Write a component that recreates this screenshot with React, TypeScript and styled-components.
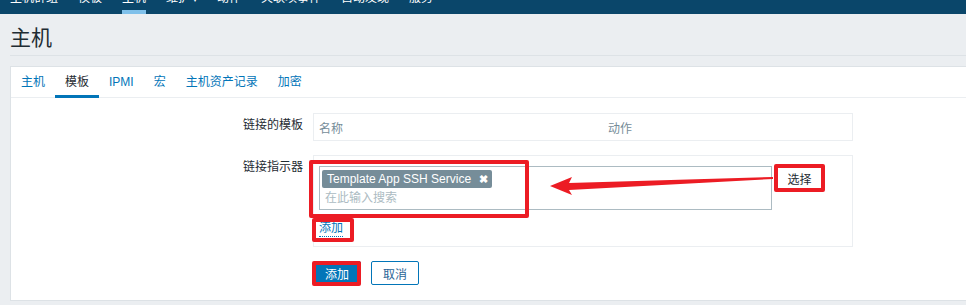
import React from 'react';
import styled, { createGlobalStyle } from 'styled-components';

const GlobalStyle = createGlobalStyle`
  html, body {
    margin: 0;
    padding: 0;
    background: #ebeef1;
    overflow: hidden;
  }
  body {
    font-family: Arial, 'Liberation Sans', 'Noto Sans CJK SC', sans-serif;
    font-size: 12px;
    color: #1f2c33;
  }
`;

const Page = styled.div`
  position: relative;
  width: 966px;
  height: 305px;
  overflow: hidden;
  background: #ebeef1;
`;

const TopNav = styled.nav`
  display: flex;
  height: 14px;
  overflow: hidden;
  background: #0a466a;
  padding-left: 10px;
`;

const NavItem = styled.div<{ active?: boolean }>`
  margin-top: -9px;
  margin-right: 20px;
  height: 23px;
  line-height: 14px;
  color: #ffffff;
  white-space: nowrap;
  border-bottom: 4px solid ${p => (p.active ? '#7fc0ea' : 'transparent')};
  box-sizing: border-box;
`;

const Caret = styled.span`
  font-size: 8px;
  margin-left: 3px;
`;

const Header = styled.header`
  margin-left: 10px;
  padding-top: 10px;
  height: 31px;
  border-bottom: 1px solid #dde2e6;
`;

const Title = styled.h1`
  margin: 0;
  font-size: 21px;
  font-weight: normal;
  line-height: 28px;
  color: #1f2c33;
`;

const Panel = styled.section`
  margin: 10px -10px 0 10px;
  background: #ffffff;
  border: 1px solid #dde2e6;
  height: 233px;
`;

const Tabs = styled.ul`
  display: flex;
  margin: 0;
  padding: 0;
  list-style: none;
  height: 30px;
  border-bottom: 1px solid #ebeef1;
`;

const Tab = styled.li<{ active?: boolean }>`
  padding: 0 10px;
  line-height: 30px;
  box-sizing: border-box;
  color: ${p => (p.active ? '#1f2c33' : '#0275b8')};
  border-bottom: 3px solid ${p => (p.active ? '#0275b8' : 'transparent')};
  margin-bottom: ${p => (p.active ? '-1px' : '0')};
  height: ${p => (p.active ? '31px' : '30px')};
`;

const Form = styled.div`
  display: grid;
  grid-template-columns: 292px 540px;
  column-gap: 10px;
  row-gap: 14px;
  padding-top: 15px;
`;

const Label = styled.div`
  text-align: right;
  padding-top: 5px;
  line-height: 14px;
  color: #1f2c33;
`;

const Box = styled.div<{ padded?: boolean }>`
  border: 1px solid #ebeef1;
  box-sizing: border-box;
  padding: ${p => (p.padded ? '10px 5px 9px 5px' : '0')};
`;

const HeadRow = styled.div`
  display: grid;
  grid-template-columns: 289px 1fr;
  height: 26px;
  align-items: center;
  color: #768d99;
`;

const HeadCell = styled.div`
  padding-left: 5px;
`;

const PickerRow = styled.div`
  display: flex;
  align-items: flex-start;
  gap: 4px;
`;

const MultiSelect = styled.div`
  width: 453px;
  box-sizing: border-box;
  border: 1px solid #acbbc2;
  padding: 2px 2px 1px 2px;
  background: #fff;
`;

const Tag = styled.div`
  display: inline-flex;
  align-items: center;
  vertical-align: top;
  height: 18px;
  margin-top: 1px;
  padding: 0 4px 0 5px;
  background: #768d99;
  border-radius: 2px;
  color: #ffffff;
  font-size: 12px;
  line-height: 18px;
`;

const TagClose = styled.span`
  margin-left: 8px;
  font-size: 11px;
  font-weight: bold;
`;

const Placeholder = styled.div`
  height: 20px;
  line-height: 20px;
  padding-left: 3px;
  color: #acbbc2;
`;

const GreyButton = styled.button`
  width: 47px;
  height: 24px;
  border: 1px solid #acbbc2;
  border-radius: 2px;
  background: #ffffff;
  color: #1f2c33;
  font: inherit;
  padding: 0;
`;

const AddLink = styled.div`
  width: fit-content;
  margin-top: 10px;
  line-height: 16px;
  color: #0275b8;
  border-bottom: 1px dotted #0275b8;
`;

const Buttons = styled.div`
  display: flex;
  gap: 10px;
`;

const Button = styled.button<{ primary?: boolean }>`
  width: 48px;
  height: 24px;
  padding: 0;
  border-radius: 2px;
  border: 1px solid #0275b8;
  background: ${p => (p.primary ? '#0275b8' : '#ffffff')};
  color: ${p => (p.primary ? '#ffffff' : '#2a6496')};
  font: inherit;
`;

const Highlight = styled.div<{ x: number; y: number; w: number; h: number }>`
  position: absolute;
  left: ${p => p.x}px;
  top: ${p => p.y}px;
  width: ${p => p.w}px;
  height: ${p => p.h}px;
  box-sizing: border-box;
  border: 4px solid #ec1c24;
  border-radius: 2px;
  pointer-events: none;
`;

const ArrowSvg = styled.svg`
  position: absolute;
  left: 0;
  top: 0;
  pointer-events: none;
`;

const navItems = ['主机群组', '模板', '主机', '维护', '动作', '关联项事件', '自动发现', '服务'];
const tabs = ['主机', '模板', 'IPMI', '宏', '主机资产记录', '加密'];

export default function App() {
  return (
    <Page>
      <GlobalStyle />
      <TopNav>
        {navItems.map(n => (
          <NavItem key={n} active={n === '主机'}>
            {n}
            {n === '维护' && <Caret>▾</Caret>}
          </NavItem>
        ))}
      </TopNav>
      <Header>
        <Title>主机</Title>
      </Header>
      <Panel>
        <Tabs>
          {tabs.map(t => (
            <Tab key={t} active={t === '模板'}>{t}</Tab>
          ))}
        </Tabs>
        <Form>
          <Label>链接的模板</Label>
          <Box>
            <HeadRow>
              <HeadCell>名称</HeadCell>
              <HeadCell>动作</HeadCell>
            </HeadRow>
          </Box>
          <Label>链接指示器</Label>
          <Box padded>
            <PickerRow>
              <MultiSelect>
                <Tag>
                  Template App SSH Service
                  <TagClose>✖</TagClose>
                </Tag>
                <Placeholder>在此输入搜索</Placeholder>
              </MultiSelect>
              <GreyButton>选择</GreyButton>
            </PickerRow>
            <AddLink>添加</AddLink>
          </Box>
          <div />
          <Buttons>
            <Button primary>添加</Button>
            <Button>取消</Button>
          </Buttons>
        </Form>
      </Panel>

      <Highlight x={309} y={160} w={220} h={58} />
      <Highlight x={774} y={164} w={51} h={28} />
      <Highlight x={312} y={218} w={42} h={24} />
      <Highlight x={312} y={261} w={49} h={25} />
      <ArrowSvg width="966" height="305" viewBox="0 0 966 305">
        <polygon points="550,186 572,177 569,183 773,177 773,179 569,190 572,195" fill="#ec1c24" />
      </ArrowSvg>
    </Page>
  );
}
